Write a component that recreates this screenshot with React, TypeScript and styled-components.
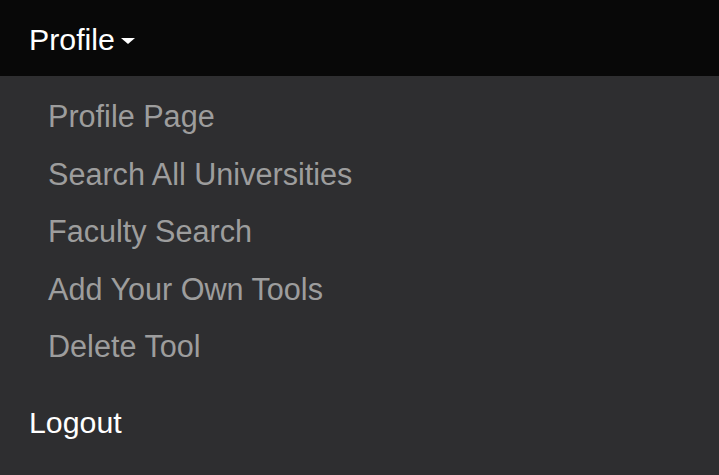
import React from "react";
import styled, { createGlobalStyle } from "styled-components";

const GlobalStyle = createGlobalStyle`
  html, body {
    margin: 0;
    padding: 0;
    background: #2e2e30;
    overflow: hidden;
  }
  body {
    font-family: "Liberation Sans", Arial, sans-serif;
  }
`;

const menuItems = [
  "Profile Page",
  "Search All Universities",
  "Faculty Search",
  "Add Your Own Tools",
  "Delete Tool",
];

export default function App() {
  return (
    <>
      <GlobalStyle />
      <Page>
        <Navbar>
          <Toggle href="#">
            Profile
            <Caret />
          </Toggle>
        </Navbar>
        <Panel>
          <Dropdown>
            {menuItems.map((item) => (
              <MenuItem key={item}>
                <MenuLink href="#">{item}</MenuLink>
              </MenuItem>
            ))}
          </Dropdown>
          <NavLink href="#">Logout</NavLink>
        </Panel>
      </Page>
    </>
  );
}

const Page = styled.div`
  width: 719px;
  height: 475px;
  display: flex;
  flex-direction: column;
`;

const Navbar = styled.div`
  height: 76px;
  box-sizing: border-box;
  background: #080808;
  display: flex;
  align-items: center;
  padding: 3px 0 0 29px;
`;

const Toggle = styled.a`
  color: #ffffff;
  font-size: 30.3px;
  text-decoration: none;
  display: flex;
  align-items: center;
`;

const Caret = styled.span`
  display: inline-block;
  width: 0;
  height: 0;
  margin-left: 6px;
  margin-top: 2px;
  border-top: 6px solid #ffffff;
  border-left: 7px solid transparent;
  border-right: 7px solid transparent;
`;

const Panel = styled.div`
  flex: 1;
  background: #2e2e30;
  display: flex;
  flex-direction: column;
  padding-top: 12px;
`;

const Dropdown = styled.ul`
  list-style: none;
  margin: 0;
  padding: 0;
`;

const MenuItem = styled.li`
  height: 57.5px;
  display: flex;
  align-items: center;
  padding-left: 48px;
`;

const MenuLink = styled.a`
  color: #9d9d9d;
  font-size: 30.6px;
  text-decoration: none;
`;

const NavLink = styled.a`
  color: #ffffff;
  font-size: 30.3px;
  text-decoration: none;
  margin: 18px 0 0 29px;
  line-height: 57.5px;
`;
